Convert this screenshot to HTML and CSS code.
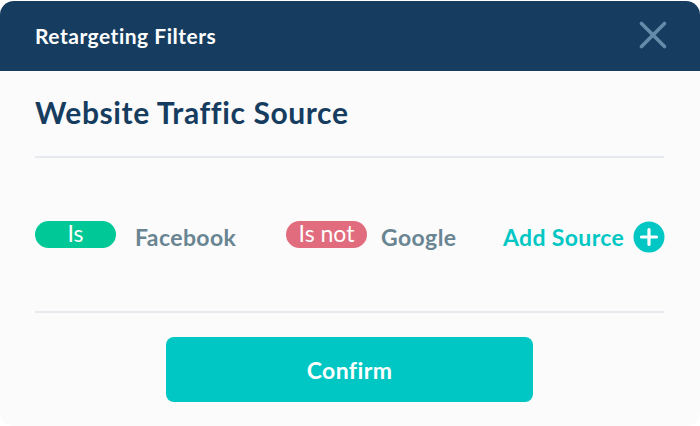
FILE: index.html
```html
<!DOCTYPE html>
<html>
<head>
<meta name="viewport" content="width=device-width, initial-scale=1.0"/>
<link rel="stylesheet" href="styles.css">
</head>
<body>
<div class="modal">
  <div class="modal-head">
    <span class="head-title">Retargeting Filters</span>
    <svg class="close-icon" width="28" height="28" viewBox="0 0 28 28">
      <path d="M2.5 2.5L25.5 25.5M25.5 2.5L2.5 25.5" stroke="#648BA8" stroke-width="3.6" stroke-linecap="round" fill="none"/>
    </svg>
  </div>
  <div class="modal-body">
    <h1 class="title">Website Traffic Source</h1>
    <div class="filters">
      <div class="filter filter1">
        <span class="pill pill-is">Is</span>
        <span class="source">Facebook</span>
      </div>
      <div class="filter filter2">
        <span class="pill pill-not">Is not</span>
        <span class="source">Google</span>
      </div>
      <div class="add">
        <span>Add Source</span>
        <svg width="32" height="32" viewBox="0 0 32 32">
          <circle cx="16" cy="16" r="15.5" fill="#00C7C3"/>
          <path d="M16 8.5V23.5M8.5 16H23.5" stroke="#fff" stroke-width="3.2" stroke-linecap="round"/>
        </svg>
      </div>
    </div>
    <div class="foot">
      <button class="confirm">Confirm</button>
    </div>
  </div>
</div>
</body>
</html>
```
FILE: styles.css
```css
html, body {
  margin: 0;
  padding: 0;
  background: #fff;
}
body {
  width: 700px;
  height: 426px;
  overflow: hidden;
  font-family: "Lato", "Liberation Sans", sans-serif;
}
.modal {
  height: 425px;
  margin-top: 1px;
  border-radius: 14px;
  overflow: hidden;
  background: #FBFBFC;
  display: flex;
  flex-direction: column;
}
.modal-head {
  height: 70px;
  background: #163D5F;
  display: flex;
  align-items: center;
  justify-content: space-between;
  padding: 0 33px 2px 35px;
  box-sizing: border-box;
}
.head-title {
  color: #fff;
  font-size: 21px;
  font-weight: 700;
  letter-spacing: 0.5px;
}
.modal-body {
  flex: 1;
  padding: 0 36px 0 35px;
  display: flex;
  flex-direction: column;
}
.title {
  margin: 0;
  height: 87px;
  box-sizing: border-box;
  border-bottom: 2px solid #E6E9EE;
  padding-top: 22px;
  color: #163D5F;
  font-size: 30px;
  line-height: 38px;
  font-weight: 700;
  letter-spacing: 0.6px;
}
.filters {
  height: 155px;
  box-sizing: border-box;
  border-bottom: 2px solid #E6E9EE;
  padding-top: 5px;
  display: flex;
  align-items: center;
}
.filter {
  display: flex;
  flex: none;
  align-items: center;
  gap: 19px;
}
.filter1 {
  width: 251px;
}
.filter2 {
  width: 217px;
  gap: 14px;
}
.pill {
  width: 81px;
  height: 27px;
  border-radius: 14px;
  color: #fff;
  font-size: 23px;
  line-height: 24px;
  text-align: center;
  margin-top: -6px;
}
.pill-is {
  background: #00C896;
}
.pill-not {
  background: #E16C7E;
}
.source {
  color: #6A8592;
  font-size: 23px;
  font-weight: 700;
  letter-spacing: 0.4px;
}
.add {
  display: flex;
  align-items: center;
  gap: 9px;
  color: #00C7C3;
  font-size: 23px;
  font-weight: 700;
  letter-spacing: 0.35px;
  white-space: nowrap;
}
.add svg {
  flex: none;
}
.foot {
  display: flex;
  justify-content: center;
  padding: 24px 0 0 0;
}
.confirm {
  width: 367px;
  height: 65px;
  border: none;
  border-radius: 8px;
  background: #00C7C3;
  color: #fff;
  font-family: inherit;
  font-size: 23px;
  font-weight: 700;
  letter-spacing: 0.4px;
}
```
